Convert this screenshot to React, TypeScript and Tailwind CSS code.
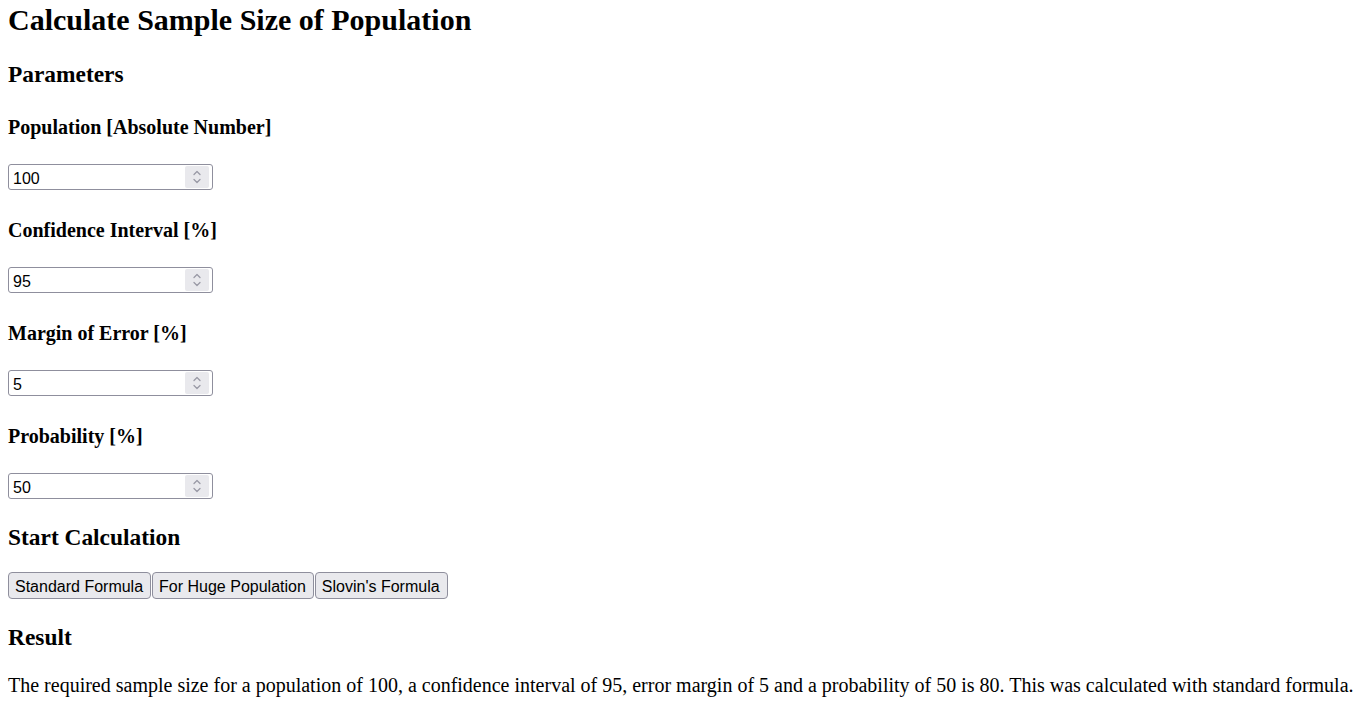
import { useState } from "react";

const serif = "font-['Liberation_Serif','Times_New_Roman',serif]";
const sans = "font-['Liberation_Sans',Arial,sans-serif]";

function Spinner() {
  return (
    <div className="mr-[3px] flex h-[22px] w-[24px] items-center justify-center rounded-[2px] bg-[#e9e9ed]">
      <svg width="10" height="16" viewBox="0 0 10 16" fill="none" stroke="#9a9aa6" strokeWidth="1.3" strokeLinecap="round" strokeLinejoin="round">
        <polyline points="2,5.5 5,2.5 8,5.5" />
        <polyline points="2,10.5 5,13.5 8,10.5" />
      </svg>
    </div>
  );
}

function NumberField({ value, onChange }: { value: string; onChange: (v: string) => void }) {
  return (
    <div className="flex h-[26px] w-[205px] items-center rounded-[3px] border border-[#8f8f9d] bg-white">
      <input
        value={value}
        onChange={(e) => onChange(e.target.value)}
        className={`${sans} h-full min-w-0 flex-1 bg-transparent pt-[3px] pl-[4px] text-[16px] text-black outline-none`}
      />
      <Spinner />
    </div>
  );
}

function Label({ children, first }: { children: React.ReactNode; first?: boolean }) {
  return (
    <h4 className={`${first ? "mt-[30px]" : "mt-[31px]"} mb-[28px] text-[20px] leading-[18px] font-bold`}>
      {children}
    </h4>
  );
}

export default function App() {
  const [population, setPopulation] = useState("100");
  const [confidence, setConfidence] = useState("95");
  const [margin, setMargin] = useState("5");
  const [probability, setProbability] = useState("50");

  const buttons = ["Standard Formula", "For Huge Population", "Slovin's Formula"];

  return (
    <div className={`${serif} min-h-screen bg-white px-2 pt-[1px] text-black`}>
      <h1 className="text-[30px] leading-[37px] font-bold">Calculate Sample Size of Population</h1>
      <h2 className="mt-[22px] text-[23.4px] leading-[28px] font-bold">Parameters</h2>

      <Label first>Population [Absolute Number]</Label>
      <NumberField value={population} onChange={setPopulation} />

      <Label>Confidence Interval [%]</Label>
      <NumberField value={confidence} onChange={setConfidence} />

      <Label>Margin of Error [%]</Label>
      <NumberField value={margin} onChange={setMargin} />

      <Label>Probability [%]</Label>
      <NumberField value={probability} onChange={setProbability} />

      <h2 className="mt-[24px] text-[23.4px] leading-[28px] font-bold">Start Calculation</h2>
      <div className="mt-[21px] flex gap-px">
        {buttons.map((b) => (
          <button
            key={b}
            className={`${sans} h-[27px] rounded-[4px] border border-[#8f8f9d] bg-[#e9e9ed] pt-[2px] pr-[7px] pl-[6px] text-[16px] text-black`}
          >
            {b}
          </button>
        ))}
      </div>

      <h2 className="mt-[24px] text-[23.4px] leading-[28px] font-bold">Result</h2>
      <p className="mt-[25px] text-[20px] leading-[18px] whitespace-nowrap">
        The required sample size for a population of {population}, a confidence interval of {confidence}, error margin of{" "}
        {margin} and a probability of {probability} is 80. This was calculated with standard formula.
      </p>
    </div>
  );
}
